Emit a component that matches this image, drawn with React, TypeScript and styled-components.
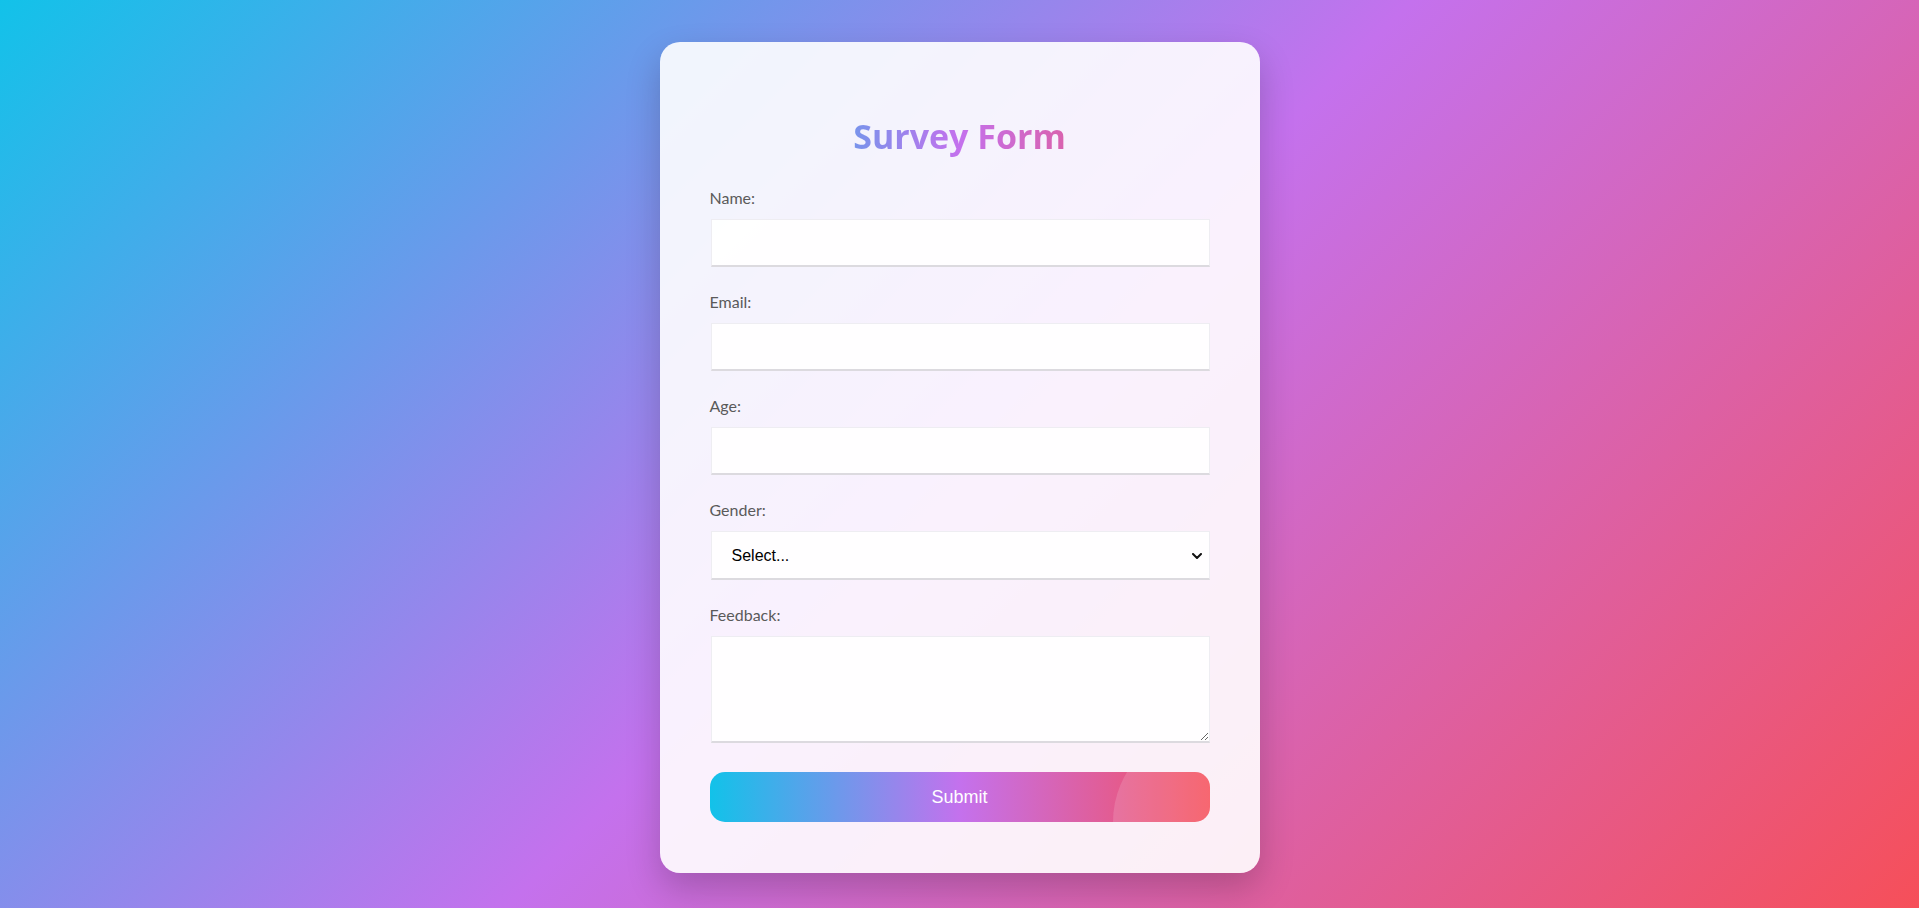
import React from "react";
import styled, { createGlobalStyle } from "styled-components";

const GlobalStyle = createGlobalStyle`
  html, body {
    margin: 0;
    padding: 0;
  }
  body {
    font-family: "Lato", "Open Sans", sans-serif;
  }
  * {
    box-sizing: border-box;
  }
`;

const Page = styled.div`
  min-height: 100vh;
  display: flex;
  justify-content: center;
  align-items: flex-start;
  padding-top: 42px;
  background: linear-gradient(135deg, #12c2e9 0%, #c471ed 50%, #f64f59 100%);
`;

const Card = styled.div`
  width: 600px;
  padding: 50px 50px 51px;
  background: rgba(255, 255, 255, 0.9);
  border-radius: 20px;
  box-shadow: 0 15px 35px rgba(0, 0, 0, 0.2);
`;

const Title = styled.h1`
  margin: 23px 0 31px;
  font-family: "Open Sans", "Lato", sans-serif;
  font-weight: 700;
  font-size: 34px;
  line-height: 42px;
  text-align: center;
  background: linear-gradient(90deg, #12c2e9 0%, #c471ed 50%, #f64f59 100%);
  -webkit-background-clip: text;
  background-clip: text;
  color: transparent;
`;

const Form = styled.form`
  display: flex;
  flex-direction: column;
  gap: 25px;
`;

const Field = styled.div`
  display: flex;
  flex-direction: column;
`;

const Label = styled.label`
  display: block;
  font-family: "Lato", sans-serif;
  font-size: 16px;
  line-height: 20px;
  color: #5a5a5a;
  margin-bottom: 11px;
`;

const controlStyles = `
  width: 100%;
  border: 1px solid #eeedf2;
  border-bottom: 2px solid #dcdadf;
  background: rgba(255, 255, 255, 0.92);
  font-family: "Liberation Sans", Arial, sans-serif;
  font-size: 16px;
  color: #000;
  outline: none;
  border-radius: 0;
`;

const ControlWrap = styled.div`
  position: relative;
  margin-left: 1px;
`;

const Input = styled.input`
  ${controlStyles}
  height: 48px;
  padding: 0 15px;
`;

const Select = styled.select`
  ${controlStyles}
  display: block;
  height: 49px;
  padding: 0 30px 0 20px;
  appearance: none;
  -webkit-appearance: none;
`;

const Chevron = styled.svg`
  position: absolute;
  right: 8px;
  top: 50%;
  width: 10px;
  height: 6px;
  margin-top: -3px;
  pointer-events: none;
`;

const TextArea = styled.textarea`
  ${controlStyles}
  display: block;
  height: 107px;
  padding: 15px;
`;

const SubmitButton = styled.button`
  position: relative;
  overflow: hidden;
  margin-top: 4px;
  width: 100%;
  height: 50px;
  border: none;
  border-radius: 15px;
  background: linear-gradient(90deg, #12c2e9 0%, #c471ed 50%, #f64f59 100%);
  color: #fff;
  font-family: "Liberation Sans", Arial, sans-serif;
  font-size: 18px;
  cursor: pointer;

  &::after {
    content: "";
    position: absolute;
    width: 192px;
    height: 192px;
    left: 403px;
    top: -46px;
    border-radius: 50%;
    background: rgba(255, 255, 255, 0.14);
  }
`;

const ButtonText = styled.span`
  position: relative;
  z-index: 1;
`;

export default function App() {
  return (
    <>
      <GlobalStyle />
      <Page>
        <Card>
          <Title>Survey Form</Title>
          <Form onSubmit={(e) => e.preventDefault()}>
            <Field>
              <Label htmlFor="name">Name:</Label>
              <ControlWrap>
                <Input id="name" type="text" />
              </ControlWrap>
            </Field>
            <Field>
              <Label htmlFor="email">Email:</Label>
              <ControlWrap>
                <Input id="email" type="email" />
              </ControlWrap>
            </Field>
            <Field>
              <Label htmlFor="age">Age:</Label>
              <ControlWrap>
                <Input id="age" type="number" />
              </ControlWrap>
            </Field>
            <Field>
              <Label htmlFor="gender">Gender:</Label>
              <ControlWrap>
                <Select id="gender" defaultValue="">
                  <option value="">Select...</option>
                  <option value="male">Male</option>
                  <option value="female">Female</option>
                  <option value="other">Other</option>
                </Select>
                <Chevron viewBox="0 0 10 6" aria-hidden="true">
                  <polyline
                    points="1,1 5,5 9,1"
                    fill="none"
                    stroke="#111"
                    strokeWidth="2"
                    strokeLinecap="round"
                    strokeLinejoin="round"
                  />
                </Chevron>
              </ControlWrap>
            </Field>
            <Field>
              <Label htmlFor="feedback">Feedback:</Label>
              <ControlWrap>
                <TextArea id="feedback" />
              </ControlWrap>
            </Field>
            <SubmitButton type="submit">
              <ButtonText>Submit</ButtonText>
            </SubmitButton>
          </Form>
        </Card>
      </Page>
    </>
  );
}
